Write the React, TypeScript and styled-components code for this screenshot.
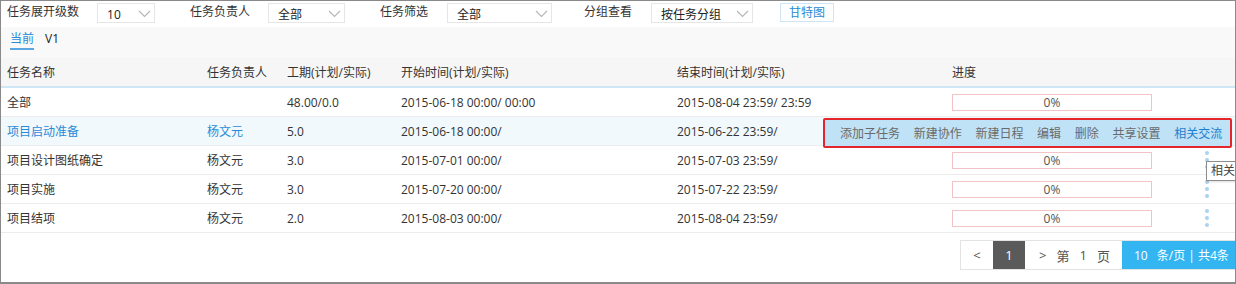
import React from "react";
import styled, { createGlobalStyle } from "styled-components";

const Global = createGlobalStyle`
  html, body { margin: 0; padding: 0; background: #fff; }
  body { font-family: "Open Sans", "Noto Sans CJK SC", sans-serif; font-size: 12px; color: #333; }
  * { box-sizing: border-box; }
`;

const Frame = styled.div`
  width: 1236px;
  height: 284px;
  border: 1px solid #8a8a8a;
  border-bottom-width: 2px;
  background: #fff;
  overflow: hidden;
  position: relative;
  display: flex;
  flex-direction: column;
`;

const Toolbar = styled.div`
  height: 26px;
  display: flex;
  align-items: flex-start;
  padding-left: 6px;
  background: #fff;
`;

const Field = styled.div<{ $after: number }>`
  display: flex;
  align-items: flex-start;
  margin-right: ${(p) => p.$after}px;
`;

const Label = styled.span<{ $gap: number }>`
  line-height: 14px;
  padding-top: 4px;
  margin-right: ${(p) => p.$gap}px;
  color: #333;
  white-space: nowrap;
`;

const Select = styled.div<{ $w: number }>`
  width: ${(p) => p.$w}px;
  height: 20px;
  margin-top: 2px;
  border: 1px solid #e6e6e6;
  background: #fff;
  display: flex;
  align-items: center;
  justify-content: space-between;
  padding: 3px 3px 0 9px;
  line-height: 16px;
  color: #222;
`;

const Chevron = () => (
  <svg width="13" height="8" viewBox="0 0 13 8" style={{ marginTop: -2 }}>
    <path d="M1 1 L6.5 6.5 L12 1" fill="none" stroke="#b5b5b5" strokeWidth="1.1" />
  </svg>
);

const GanttButton = styled.div`
  width: 54px;
  height: 19px;
  margin-top: 2px;
  border: 1px solid #cfe4f5;
  color: #2a8ad6;
  text-align: center;
  line-height: 17px;
  background: #fff;
`;

const Body = styled.div`
  flex: 1;
  background: #f9f9f9;
  display: flex;
  flex-direction: column;
`;

const Tabs = styled.div`
  height: 31px;
  display: flex;
  align-items: flex-start;
  padding: 4px 0 0 9px;
  gap: 11px;
`;

const Tab = styled.span<{ $active?: boolean }>`
  line-height: 16px;
  padding-bottom: 1px;
  color: ${(p) => (p.$active ? "#2a8ad6" : "#222")};
  border-bottom: 2px solid ${(p) => (p.$active ? "#5aa6e2" : "transparent")};
`;

const cols = "200px 80px 114px 276px 275px 200px 1fr";

const HeadRow = styled.div`
  display: grid;
  grid-template-columns: ${cols};
  height: 30px;
  align-items: center;
  padding-left: 6px;
  background: #f6f6f6;
  border-bottom: 2px solid #cfe6f6;
  color: #333;
`;

const Row = styled.div<{ $hover?: boolean }>`
  position: relative;
  display: grid;
  grid-template-columns: ${cols};
  height: 29px;
  align-items: center;
  padding-left: 6px;
  background: ${(p) => (p.$hover ? "#f1f9fc" : "#fff")};
  border-bottom: 1px solid #ececec;
  color: #333;
`;

const Cell = styled.span<{ $link?: boolean }>`
  color: ${(p) => (p.$link ? "#2a8ad6" : "#333")};
  white-space: nowrap;
`;

const Progress = styled.div`
  width: 200px;
  height: 17px;
  border: 1px solid #f2c4c7;
  background: #fff;
  text-align: center;
  line-height: 15px;
  color: #555;
`;

const DotsCell = styled.div`
  display: flex;
  flex-direction: column;
  gap: 3px;
  padding-left: 53px;
`;

const Dot = styled.span`
  width: 4px;
  height: 4px;
  border-radius: 50%;
  background: #a9d3f0;
`;

const ActionBar = styled.div`
  position: absolute;
  left: 822px;
  top: 1px;
  width: 409px;
  height: 30px;
  border: 2px solid #e4262c;
  border-radius: 2px;
  background: #bfe2f7;
  display: flex;
  align-items: center;
  gap: 13.7px;
  padding-left: 15px;
  z-index: 2;
`;

const Action = styled.span<{ $primary?: boolean }>`
  color: ${(p) => (p.$primary ? "#1d7fcf" : "#6a6a6a")};
  white-space: nowrap;
`;

const Tooltip = styled.div`
  position: absolute;
  left: 1205px;
  top: 15px;
  height: 20px;
  padding: 0 1px 0 4px;
  border: 1px solid #8d8d8d;
  border-right: none;
  background: #fff;
  line-height: 18px;
  color: #444;
  white-space: nowrap;
  box-shadow: 1px 1px 2px rgba(0,0,0,0.15);
  z-index: 3;
`;

const Footer = styled.div`
  flex: 1;
  background: #fff;
  display: flex;
  justify-content: flex-end;
  align-items: flex-start;
  padding-top: 7px;
`;

const Pager = styled.div`
  display: flex;
  height: 30px;
  border: 1px solid #e3e3e3;
  border-right: none;
  background: #fff;
`;

const PageCell = styled.div<{ $w: number; $dark?: boolean }>`
  width: ${(p) => p.$w}px;
  display: flex;
  align-items: center;
  justify-content: center;
  background: ${(p) => (p.$dark ? "#5a5a5a" : "transparent")};
  color: ${(p) => (p.$dark ? "#fff" : "#555")};
  font-size: 13px;
`;

const PageInfo = styled.div`
  display: flex;
  align-items: center;
  gap: 10px;
  padding: 0 0 0 14px;
  width: 97px;
  color: #555;
  font-size: 13px;
`;

const PageSize = styled.div`
  background: #33b5f2;
  color: #fff;
  display: flex;
  align-items: center;
  padding-left: 12px;
  width: 113px;
  gap: 9px;
  font-size: 12px;
  white-space: nowrap;
`;

const Dots = () => (
  <DotsCell>
    <Dot />
    <Dot />
    <Dot />
  </DotsCell>
);

type Task = { name: string; owner: string; dur: string; start: string; end: string; link?: boolean; dots?: boolean };

const tasks: Task[] = [
  { name: "全部", owner: "", dur: "48.00/0.0", start: "2015-06-18 00:00/ 00:00", end: "2015-08-04 23:59/ 23:59" },
  { name: "项目启动准备", owner: "杨文元", dur: "5.0", start: "2015-06-18 00:00/", end: "2015-06-22 23:59/", link: true },
  { name: "项目设计图纸确定", owner: "杨文元", dur: "3.0", start: "2015-07-01 00:00/", end: "2015-07-03 23:59/", dots: true },
  { name: "项目实施", owner: "杨文元", dur: "3.0", start: "2015-07-20 00:00/", end: "2015-07-22 23:59/", dots: true },
  { name: "项目结项", owner: "杨文元", dur: "2.0", start: "2015-08-03 00:00/", end: "2015-08-04 23:59/", dots: true },
];

const actions = ["添加子任务", "新建协作", "新建日程", "编辑", "删除", "共享设置"];

export default function App() {
  return (
    <>
      <Global />
      <Frame>
        <Toolbar>
          <Field $after={35}>
            <Label $gap={18}>任务展开级数</Label>
            <Select $w={58}>10<Chevron /></Select>
          </Field>
          <Field $after={35}>
            <Label $gap={18}>任务负责人</Label>
            <Select $w={77}>全部<Chevron /></Select>
          </Field>
          <Field $after={32}>
            <Label $gap={19}>任务筛选</Label>
            <Select $w={105}>全部<Chevron /></Select>
          </Field>
          <Field $after={27}>
            <Label $gap={19}>分组查看</Label>
            <Select $w={102}>按任务分组<Chevron /></Select>
          </Field>
          <GanttButton>甘特图</GanttButton>
        </Toolbar>
        <Body>
          <Tabs>
            <Tab $active>当前</Tab>
            <Tab>V1</Tab>
          </Tabs>
          <HeadRow>
            <Cell>任务名称</Cell>
            <Cell>任务负责人</Cell>
            <Cell>工期(计划/实际)</Cell>
            <Cell>开始时间(计划/实际)</Cell>
            <Cell>结束时间(计划/实际)</Cell>
            <Cell>进度</Cell>
            <span />
          </HeadRow>
          {tasks.map((t, i) => (
            <Row key={t.name} $hover={t.link}>
              <Cell $link={t.link}>{t.name}</Cell>
              <Cell $link={t.link}>{t.owner}</Cell>
              <Cell>{t.dur}</Cell>
              <Cell>{t.start}</Cell>
              <Cell>{t.end}</Cell>
              {t.link ? <span /> : <Progress>0%</Progress>}
              {t.dots ? <Dots /> : <span />}
              {t.link && (
                <ActionBar>
                  {actions.map((a) => (
                    <Action key={a}>{a}</Action>
                  ))}
                  <Action $primary>相关交流</Action>
                </ActionBar>
              )}
              {i === 2 && <Tooltip>相关</Tooltip>}
            </Row>
          ))}
          <Footer>
            <Pager>
              <PageCell $w={32}>&lt;</PageCell>
              <PageCell $w={32} $dark>1</PageCell>
              <PageInfo>
                <span>&gt;</span>
                <span>第</span>
                <span>1</span>
                <span>页</span>
              </PageInfo>
              <PageSize>
                <span>10</span>
                <span>条/页 | 共4条</span>
              </PageSize>
            </Pager>
          </Footer>
        </Body>
      </Frame>
    </>
  );
}
